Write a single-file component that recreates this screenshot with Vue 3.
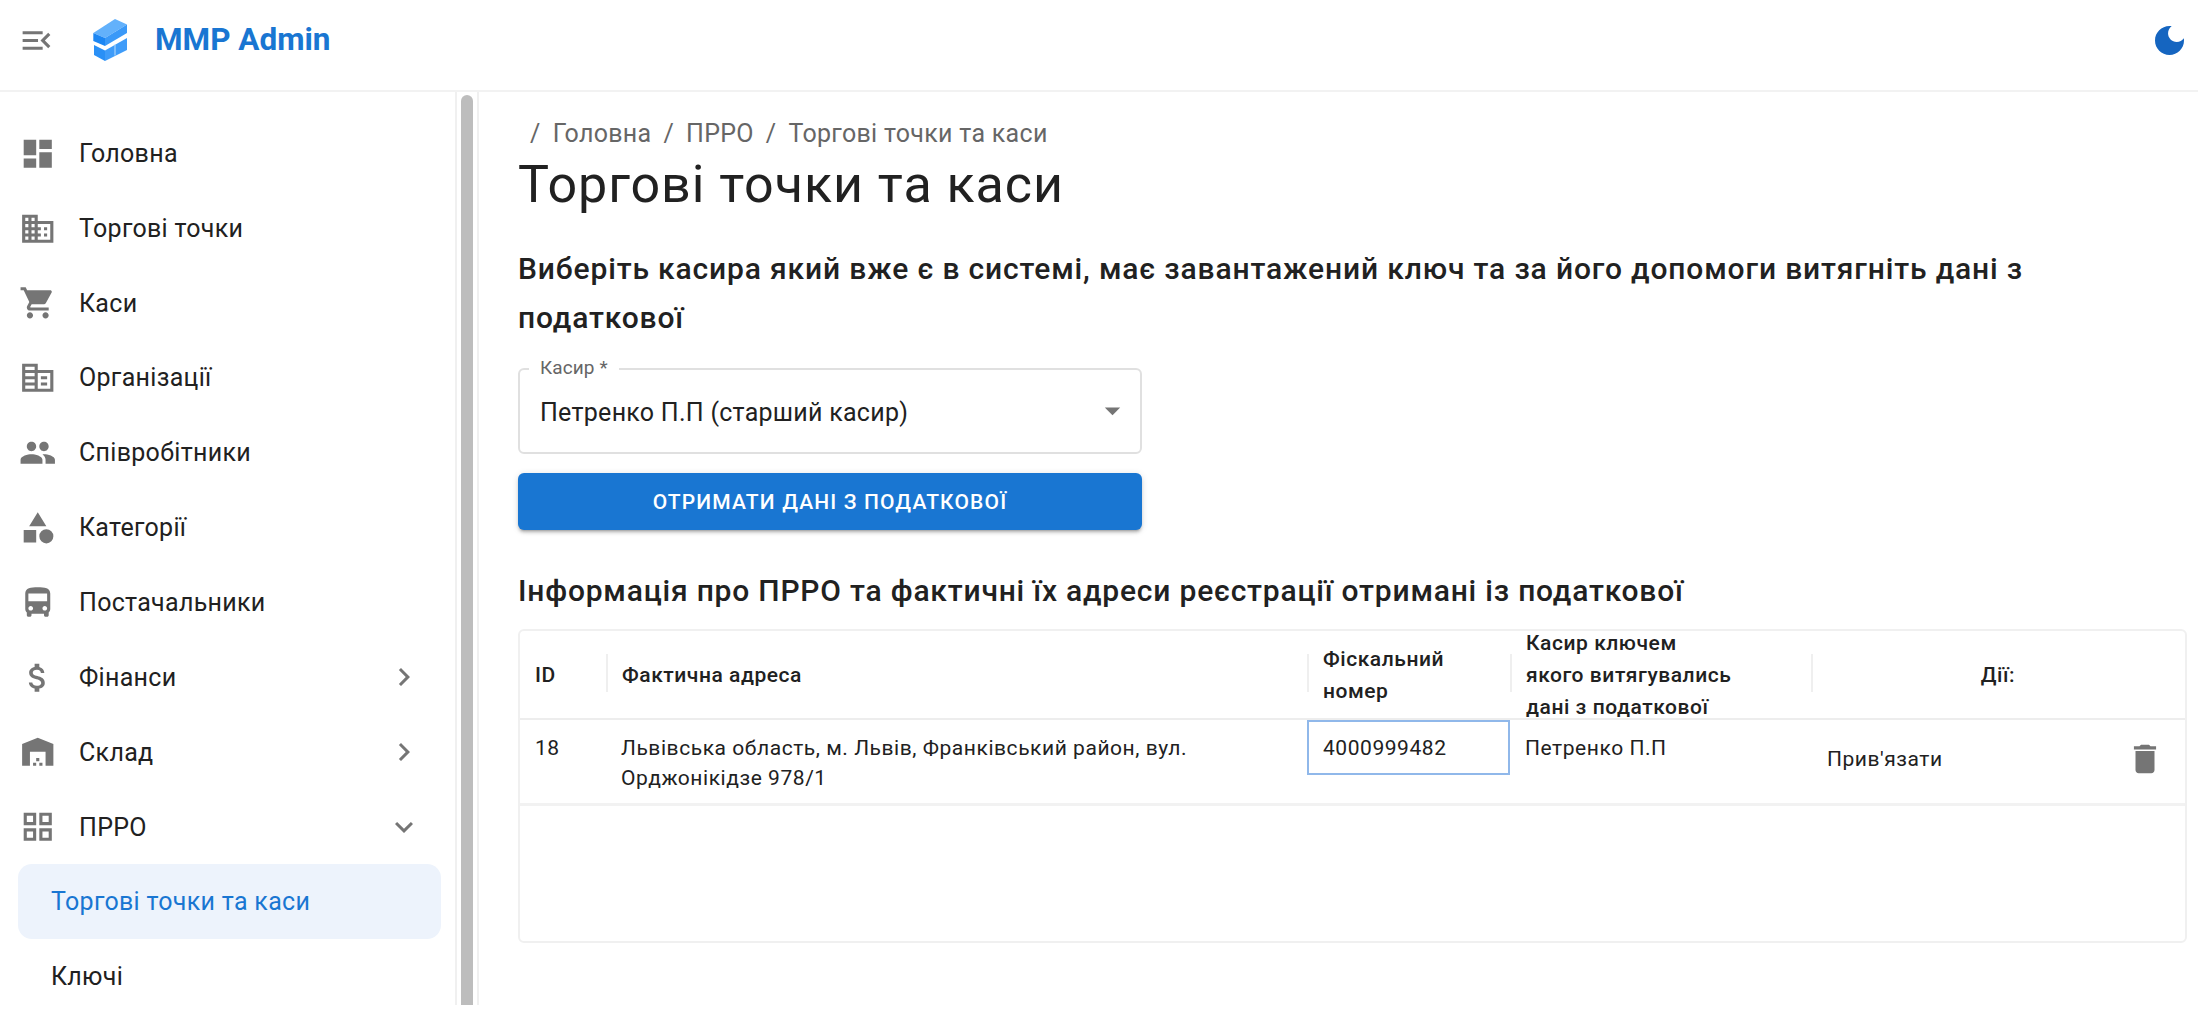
<script setup>
const icons = {
  dashboard: 'M3 13h8V3H3v10zm0 8h8v-6H3v6zm10 0h8V11h-8v10zm0-18v6h8V3h-8z',
  domain: 'M12 7V3H2v18h20V7H12zM6 19H4v-2h2v2zm0-4H4v-2h2v2zm0-4H4V9h2v2zm0-4H4V5h2v2zm4 12H8v-2h2v2zm0-4H8v-2h2v2zm0-4H8V9h2v2zm0-4H8V5h2v2zm10 12h-8v-2h2v-2h-2v-2h2v-2h-2V9h8v10zm-2-8h-2v2h2v-2zm0 4h-2v2h2v-2z',
  cart: 'M7 18c-1.1 0-1.99.9-1.99 2S5.9 22 7 22s2-.9 2-2-.9-2-2-2zM1 2v2h2l3.6 7.59-1.35 2.45c-.16.28-.25.61-.25.96 0 1.1.9 2 2 2h12v-2H7.42c-.14 0-.25-.11-.25-.25l.03-.12.9-1.63h7.45c.75 0 1.41-.41 1.75-1.03l3.58-6.49c.08-.14.12-.31.12-.48 0-.55-.45-1-1-1H5.21l-.94-2H1zm16 16c-1.1 0-1.99.9-1.99 2s.89 2 1.99 2 2-.9 2-2-.9-2-2-2z',
  corp: 'M12 7V3H2v18h20V7H12zm-2 12H4v-2h6v2zm0-4H4v-2h6v2zm0-4H4V9h6v2zm0-4H4V5h6v2zm10 12h-8V9h8v10zm-2-8h-4v2h4v-2zm0 4h-4v2h4v-2z',
  people: 'M16 11c1.66 0 2.99-1.34 2.99-3S17.66 5 16 5c-1.66 0-3 1.34-3 3s1.34 3 3 3zm-8 0c1.66 0 2.99-1.34 2.99-3S9.66 5 8 5C6.34 5 5 6.34 5 8s1.34 3 3 3zm0 2c-2.33 0-7 1.17-7 3.5V19h14v-2.5c0-2.33-4.67-3.5-7-3.5zm8 0c-.29 0-.62.02-.97.05 1.16.84 1.97 1.97 1.97 3.45V19h6v-2.5c0-2.33-4.67-3.5-7-3.5z',
  category: 'M12 2l-5.5 9h11zM17.5 13a4.5 4.5 0 1 0 0 9 4.5 4.5 0 0 0 0-9zM3 13.5h8v8H3z',
  bus: 'M4 16c0 .88.39 1.67 1 2.22V20c0 .55.45 1 1 1h1c.55 0 1-.45 1-1v-1h8v1c0 .55.45 1 1 1h1c.55 0 1-.45 1-1v-1.78c.61-.55 1-1.34 1-2.22V6c0-3.5-3.58-4-8-4s-8 .5-8 4v10zm3.5 1c-.83 0-1.5-.67-1.5-1.5S6.67 14 7.5 14s1.5.67 1.5 1.5S8.33 17 7.5 17zm9 0c-.83 0-1.5-.67-1.5-1.5s.67-1.5 1.5-1.5 1.5.67 1.5 1.5-.67 1.5-1.5 1.5zm1.5-6H6V6h12v5z',
  money: 'M11.8 10.9c-2.27-.59-3-1.2-3-2.15 0-1.09 1.01-1.85 2.7-1.85 1.78 0 2.44.85 2.5 2.1h2.21c-.07-1.72-1.12-3.3-3.21-3.81V3h-3v2.16c-1.94.42-3.5 1.68-3.5 3.61 0 2.31 1.91 3.46 4.7 4.13 2.5.6 3 1.48 3 2.41 0 .69-.49 1.79-2.7 1.79-2.06 0-2.87-.92-2.98-2.1h-2.2c.12 2.19 1.76 3.42 3.68 3.83V21h3v-2.15c1.95-.37 3.5-1.5 3.5-3.55 0-2.84-2.43-3.81-4.7-4.4z',
  warehouse: 'M22 21V7L12 3 2 7v14h5v-9h10v9h5zm-11-2H9v2h2v-2zm2-3h-2v2h2v-2zm2 3h-2v2h2v-2z',
  grid: 'M3 3v8h8V3H3zm6 6H5V5h4v4zm-6 4v8h8v-8H3zm6 6H5v-4h4v4zm4-16v8h8V3h-8zm6 6h-4V5h4v4zm-6 4v8h8v-8h-8zm6 6h-4v-4h4v4z'
}
const chevronRight = 'M10 6 8.59 7.41 13.17 12l-4.58 4.59L10 18l6-6z'
const chevronDown = 'M16.59 8.59 12 13.17 7.41 8.59 6 10l6 6 6-6z'
const nav = [
  { label: 'Головна', icon: 'dashboard' },
  { label: 'Торгові точки', icon: 'domain' },
  { label: 'Каси', icon: 'cart' },
  { label: 'Організації', icon: 'corp' },
  { label: 'Співробітники', icon: 'people' },
  { label: 'Категорії', icon: 'category' },
  { label: 'Постачальники', icon: 'bus' },
  { label: 'Фінанси', icon: 'money', chevron: chevronRight },
  { label: 'Склад', icon: 'warehouse', chevron: chevronRight },
  { label: 'ПРРО', icon: 'grid', chevron: chevronDown }
]
</script>

<template>
  <div class="page">
    <header class="topbar">
      <svg class="menu-icon" viewBox="0 0 24 24"><path d="M3 18h13v-2H3v2zm0-5h10v-2H3v2zm0-7v2h13V6H3zm18 9.59L17.42 12 21 8.41 19.59 7l-5 5 5 5L21 15.59z" /></svg>
      <svg class="logo" viewBox="0 0 34 42">
        <path d="M.3 14 22 0l12 5.6L12 19z" fill="#63b1fb" />
        <path d="M.3 14 12 19v8L.3 22z" fill="#1c86f3" />
        <path d="M12 19 34 5.6V14L12 27z" fill="#3a99f8" />
        <path d="M1 26l11 5.5V42L1 36z" fill="#2a90f6" />
        <path d="M12 31.5 34 19v12L12 42z" fill="#3f9cf9" />
        <path d="M22 25.5v11" stroke="#a5d3fc" stroke-width="1.2" />
      </svg>
      <span class="brand">MMP Admin</span>
      <svg class="moon" viewBox="3 3 18 18"><path d="M12 3c-4.97 0-9 4.03-9 9s4.03 9 9 9 9-4.03 9-9c0-.46-.04-.92-.1-1.36-.98 1.37-2.58 2.26-4.4 2.26-2.98 0-5.4-2.42-5.4-5.4 0-1.81.89-3.42 2.26-4.4-.44-.06-.9-.1-1.36-.1z" /></svg>
    </header>

    <div class="body-row">
      <aside class="sidebar">
        <nav class="nav">
          <div v-for="item in nav" :key="item.label" class="nav-item">
            <svg class="nav-icon" viewBox="0 0 24 24"><path :d="icons[item.icon]" /></svg>
            <span class="nav-label">{{ item.label }}</span>
            <svg v-if="item.chevron" class="chevron" viewBox="0 0 24 24"><path :d="item.chevron" /></svg>
          </div>
          <div class="sub-item active">Торгові точки та каси</div>
          <div class="sub-item">Ключі</div>
        </nav>
        <div class="scroll-track"><div class="scroll-thumb"></div></div>
      </aside>

      <main class="content">
        <div class="crumbs">
          <span>/</span><span>Головна</span><span>/</span><span>ПРРО</span><span>/</span><span>Торгові точки та каси</span>
        </div>
        <h1 class="title">Торгові точки та каси</h1>
        <h2 class="lead">Виберіть касира який вже є в системі, має завантажений ключ та за його допомоги витягніть дані з податкової</h2>

        <div class="form">
          <div class="select">
            <span class="select-label">Касир *</span>
            <span class="select-value">Петренко П.П (старший касир)</span>
            <svg class="select-arrow" viewBox="0 0 24 24"><path d="M7 10l5 5 5-5z" /></svg>
          </div>
          <button class="primary" type="button">Отримати дані з податкової</button>
        </div>

        <h2 class="section">Інформація про ПРРО та фактичні їх адреси реєстрації отримані із податкової</h2>

        <section class="table">
          <div class="row head">
            <div class="cell">ID</div>
            <div class="cell sep">Фактична адреса</div>
            <div class="cell sep">Фіскальний<br>номер</div>
            <div class="cell sep">Касир ключем<br>якого витягувались<br>дані з податкової</div>
            <div class="cell sep center">Дії:</div>
          </div>
          <div class="row data">
            <div class="cell">18</div>
            <div class="cell">Львівська область, м. Львів, Франківський район, вул. Орджонікідзе 978/1</div>
            <div class="cell focus">4000999482</div>
            <div class="cell">Петренко П.П</div>
            <div class="cell actions">
              <span class="bind">Прив'язати</span>
              <svg class="trash" viewBox="0 0 24 24"><path d="M6 19c0 1.1.9 2 2 2h8c1.1 0 2-.9 2-2V7H6v12zM19 4h-3.5l-1-1h-5l-1 1H5v2h14V4z" /></svg>
            </div>
          </div>
        </section>
      </main>
    </div>
  </div>
</template>

<style>
html, body { margin: 0; background: #fff; overflow: hidden; }
</style>

<style scoped>
.page { width: 2198px; height: 1017px; font-family: Roboto, "Liberation Sans", sans-serif; color: #212121; background: #fff; overflow: hidden; }
.topbar { height: 90px; box-sizing: content-box; border-bottom: 2px solid #f2f2f2; display: flex; align-items: center; padding: 0 14px 0 18px; }
.menu-icon { width: 37px; height: 37px; fill: #757575; margin-right: 38px; margin-top: -10px; flex: none; }
.logo { width: 34px; height: 42px; margin-right: 28px; margin-top: -10px; flex: none; }
.brand { font-size: 31.5px; font-weight: 700; color: #1976d2; position: relative; top: -6px; }
.moon { width: 29px; height: 29px; fill: #1565c0; margin-left: auto; margin-top: -10px; }

.body-row { display: flex; height: 913px; }
.sidebar { width: 479px; flex: none; height: 913px; display: flex; box-sizing: border-box; }
.nav { width: 455px; flex: none; padding: 24px 14px 0 18px; box-sizing: border-box; overflow: hidden; }
.nav-item { height: 74.85px; display: flex; align-items: center; font-size: 25px; letter-spacing: .3px; color: #212121; }
.nav-icon { width: 37.5px; height: 37.5px; fill: #757575; flex: none; margin-left: 1px; }
.nav-label { margin-left: 22.5px; flex: 1; }
.chevron { width: 36px; height: 36px; fill: #757575; margin-right: 19px; flex: none; }
.sub-item { height: 74.85px; display: flex; align-items: center; font-size: 25px; letter-spacing: .3px; padding-left: 33px; color: #212121; border-radius: 14px; width: 423px; box-sizing: border-box; }
.sub-item.active { background: #edf3fc; color: #1976d2; }
.scroll-track { width: 24px; height: 913px; flex: none; box-sizing: border-box; border-left: 2px solid #f0f0f0; border-right: 2px solid #f0f0f0; padding: 3px 4px 0 4px; }
.scroll-thumb { height: 100%; background: #bdbdbd; border-radius: 7px 7px 0 0; }

.content { flex: 1; padding: 25px 11px 0 39px; box-sizing: border-box; min-width: 0; }
.crumbs { display: flex; gap: 12px; font-size: 25px; letter-spacing: .3px; line-height: 33px; color: #666; padding-left: 12px; }
.title { font-size: 52px; letter-spacing: .95px; line-height: 56px; font-weight: 400; margin: 7px 0 0; color: #212121; }
.lead { font-size: 30px; letter-spacing: .85px; line-height: 49px; font-weight: 500; margin: 31px 0 0; color: #212121; width: 1660px; }
.form { width: 624px; margin-top: 26px; }
.select { position: relative; height: 86px; box-sizing: border-box; border: 2px solid #e0e0e0; border-radius: 6px; display: flex; align-items: center; padding-left: 20px; }
.select-label { position: absolute; top: -12px; left: 9px; padding: 0 11px; background: #fff; font-size: 19px; letter-spacing: .1px; line-height: 20px; color: #666; }
.select-value { font-size: 25px; letter-spacing: .27px; color: #212121; position: relative; top: 1px; }
.select-arrow { position: absolute; right: 9.5px; top: 21.7px; width: 37px; height: 37px; fill: #757575; }
.primary { display: block; width: 100%; height: 57px; margin-top: 19px; border: 0; border-radius: 6px; background: #1976d2; color: #fff; font: 500 21px Roboto, sans-serif; letter-spacing: 1.15px; text-transform: uppercase; box-shadow: 0 3px 2px -2px rgba(0,0,0,.2), 0 3px 3px rgba(0,0,0,.14), 0 1px 7px rgba(0,0,0,.12); }
.section { font-size: 30px; letter-spacing: .8px; line-height: 40px; font-weight: 500; margin: 41px 0 0; color: #212121; }

.table { margin-top: 18px; width: 1669px; height: 314px; box-sizing: border-box; border: 2px solid #f0f0f0; border-radius: 6px; overflow: hidden; font-size: 21px; letter-spacing: .55px; }
.row { display: grid; grid-template-columns: 86px 701px 203px 301px 1fr; }
.head { height: 87px; grid-template-rows: 87px; border-bottom: 2px solid #ededed; align-items: center; font-weight: 500; line-height: 32px; }
.head .cell { padding-left: 15px; position: relative; }
.head .sep { padding-left: 16px; }
.head .sep::before { content: ""; position: absolute; left: 0; top: 50%; margin-top: -21px; width: 2px; height: 38px; background: #efefef; }
.head .center { text-align: center; padding-left: 0; }
.data { height: 83px; border-bottom: 3px solid #f2f2f2; line-height: 30px; color: #212121; }
.data .cell { padding: 13px 15px 0; box-sizing: border-box; }
.data .focus { height: 55px; outline: 2px solid #90b8ea; outline-offset: -2px; padding-left: 16px; }
.actions { display: flex; align-items: center; justify-content: space-between; height: 78px; padding: 0 21px 0 16px !important; }
.trash { width: 38px; height: 38px; fill: #757575; }
</style>
